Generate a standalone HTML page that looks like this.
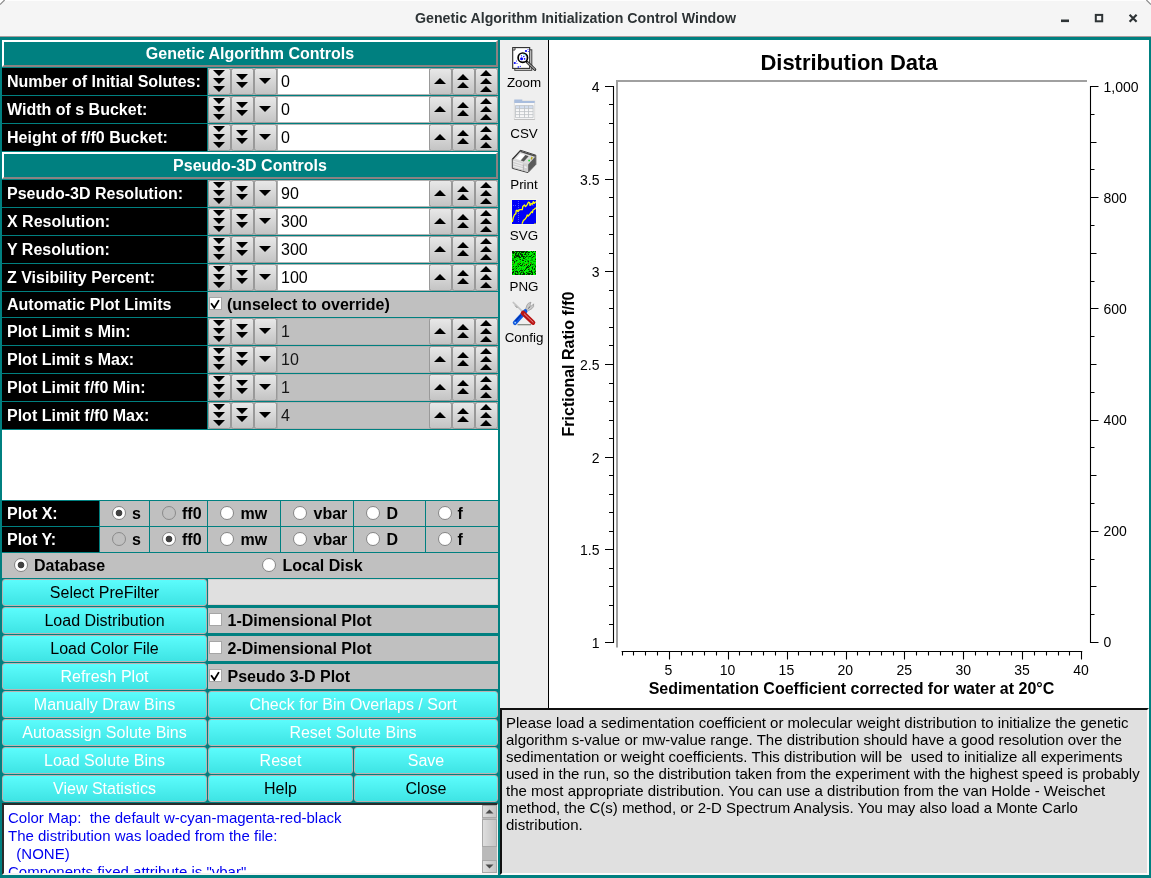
<!DOCTYPE html><html><head><meta charset='utf-8'><title>Genetic Algorithm Initialization Control Window</title><style>
*{box-sizing:border-box;margin:0;padding:0}
html,body{width:1151px;height:878px;overflow:hidden;background:#008080;font-family:"Liberation Sans",sans-serif;font-size:16px;color:#000}
div,span,svg{position:absolute}
.tb{left:0;top:0;width:1151px;height:37px;background:#f5f5f5;border-bottom:1px solid #a89c9c}
.tt{left:0;top:0;width:1151px;height:36px;line-height:36px;text-align:center;font-weight:bold;font-size:14.2px;color:#2e3436;position:absolute}
.hd{left:2px;width:496px;height:27px;border:2px solid #fff;border-right-color:#8b8282;border-bottom-color:#8b8282;color:#fff;font-weight:bold;text-align:center;line-height:24px;background:#008080}
.lb{left:2px;width:205px;height:27px;background:#000;color:#fff;font-weight:bold;line-height:28px;padding-left:5px;white-space:nowrap}
.cb{width:23px;height:27px;border:1px solid #999;border-radius:2.5px;background:linear-gradient(#e8e8e8,#c4c4c4)}
.cbg{width:70px;height:27px;background:#aeaeae}
.cb svg{left:0;top:0}
.in{left:278px;width:151px;height:27px;background:#fff;border-top:1px solid #b4b4b4;border-bottom:1px solid #b4b4b4;line-height:25px;padding-left:3px}
.in.d{background:#c0c0c0;color:#151515}
.g{background:#c0c0c0}
.b{font-weight:bold;white-space:nowrap}
.rd{width:14px;height:14px;border-radius:50%;border:1px solid #858585;background:#fff}
.rd.dis{background:#c0c0c0;border-color:#8a8a8a}
.rd.on{background:radial-gradient(circle at 50% 50%,#424242 0,#424242 2.9px,#fff 3.7px)}
.ck{width:13px;height:13px;background:#fff;border:1px solid #a6a6a6}
.pb{height:27px;border:1px solid #bcb0b0;border-radius:3px;background:linear-gradient(#5cfcfc,#3ee4e4);text-align:center;line-height:25px;white-space:nowrap}
.pb.w{color:#fff}
.tl{font-size:13.4px;text-align:center;width:48px;left:500px;line-height:15px}
</style></head><body><div id='w' style='left:0;top:0;width:1151px;height:878px;will-change:transform'>
<div class='tb'><div class='tt'>Genetic Algorithm Initialization Control Window</div>
<svg width='100' height='37' style='left:1051px;top:0' viewBox='1051 0 100 37'><rect x='1061' y='19.5' width='8' height='2.6' fill='#2e3436'/><rect x='1095.8' y='14.9' width='6.4' height='6.4' fill='none' stroke='#2e3436' stroke-width='2'/><path d='M1129.6 14.7 L1136.6 21.7 M1136.6 14.7 L1129.6 21.7' stroke='#2e3436' stroke-width='2.2' fill='none'/></svg><svg width='1151' height='8' style='left:0;top:0' viewBox='0 0 1151 8'><rect x='0' y='0' width='1151' height='1' fill='#fdfdfd'/><path d='M0 0 L5 0 L0 5Z M1151 0 L1146 0 L1151 5Z' fill='#fff'/><path d='M0 4.6 L4.6 0 M1151 4.6 L1146.4 0' stroke='#8c8c8c' stroke-width='1.2' fill='none'/></svg></div>
<div class='hd' style='top:40px'>Genetic Algorithm Controls</div>
<div class='lb' style='top:68px'>Number of Initial Solutes:</div>
<div class='cbg' style='left:208px;top:68px'></div><div class='cbg' style='left:429px;width:69px;top:68px'></div>
<div class='cb' style='left:208px;top:68px'><svg width='21' height='25' viewBox='0 0 21 25'><path d='M4.0 1.0 L16.0 1.0 L10 7.0Z M4.0 9.0 L16.0 9.0 L10 15.0Z M4.0 17.0 L16.0 17.0 L10 23.0Z' fill='#000'/></svg></div>
<div class='cb' style='left:231px;top:68px'><svg width='21' height='25' viewBox='0 0 21 25'><path d='M4.0 5.0 L16.0 5.0 L10 11.0Z M4.0 13.0 L16.0 13.0 L10 19.0Z' fill='#000'/></svg></div>
<div class='cb' style='left:254px;top:68px'><svg width='21' height='25' viewBox='0 0 21 25'><path d='M4.0 9.0 L16.0 9.0 L10 15.0Z' fill='#000'/></svg></div>
<div class='in' style='top:68px'>0</div>
<div class='cb' style='left:429px;top:68px'><svg width='21' height='25' viewBox='0 0 21 25'><path d='M4.0 15.0 L16.0 15.0 L10 9.0Z' fill='#000'/></svg></div>
<div class='cb' style='left:452px;top:68px'><svg width='21' height='25' viewBox='0 0 21 25'><path d='M4.0 11.0 L16.0 11.0 L10 5.0Z M4.0 19.0 L16.0 19.0 L10 13.0Z' fill='#000'/></svg></div>
<div class='cb' style='left:475px;top:68px'><svg width='21' height='25' viewBox='0 0 21 25'><path d='M4.0 7.0 L16.0 7.0 L10 1.0Z M4.0 15.0 L16.0 15.0 L10 9.0Z M4.0 23.0 L16.0 23.0 L10 17.0Z' fill='#000'/></svg></div>
<div class='lb' style='top:96px'>Width of s Bucket:</div>
<div class='cbg' style='left:208px;top:96px'></div><div class='cbg' style='left:429px;width:69px;top:96px'></div>
<div class='cb' style='left:208px;top:96px'><svg width='21' height='25' viewBox='0 0 21 25'><path d='M4.0 1.0 L16.0 1.0 L10 7.0Z M4.0 9.0 L16.0 9.0 L10 15.0Z M4.0 17.0 L16.0 17.0 L10 23.0Z' fill='#000'/></svg></div>
<div class='cb' style='left:231px;top:96px'><svg width='21' height='25' viewBox='0 0 21 25'><path d='M4.0 5.0 L16.0 5.0 L10 11.0Z M4.0 13.0 L16.0 13.0 L10 19.0Z' fill='#000'/></svg></div>
<div class='cb' style='left:254px;top:96px'><svg width='21' height='25' viewBox='0 0 21 25'><path d='M4.0 9.0 L16.0 9.0 L10 15.0Z' fill='#000'/></svg></div>
<div class='in' style='top:96px'>0</div>
<div class='cb' style='left:429px;top:96px'><svg width='21' height='25' viewBox='0 0 21 25'><path d='M4.0 15.0 L16.0 15.0 L10 9.0Z' fill='#000'/></svg></div>
<div class='cb' style='left:452px;top:96px'><svg width='21' height='25' viewBox='0 0 21 25'><path d='M4.0 11.0 L16.0 11.0 L10 5.0Z M4.0 19.0 L16.0 19.0 L10 13.0Z' fill='#000'/></svg></div>
<div class='cb' style='left:475px;top:96px'><svg width='21' height='25' viewBox='0 0 21 25'><path d='M4.0 7.0 L16.0 7.0 L10 1.0Z M4.0 15.0 L16.0 15.0 L10 9.0Z M4.0 23.0 L16.0 23.0 L10 17.0Z' fill='#000'/></svg></div>
<div class='lb' style='top:124px'>Height of f/f0 Bucket:</div>
<div class='cbg' style='left:208px;top:124px'></div><div class='cbg' style='left:429px;width:69px;top:124px'></div>
<div class='cb' style='left:208px;top:124px'><svg width='21' height='25' viewBox='0 0 21 25'><path d='M4.0 1.0 L16.0 1.0 L10 7.0Z M4.0 9.0 L16.0 9.0 L10 15.0Z M4.0 17.0 L16.0 17.0 L10 23.0Z' fill='#000'/></svg></div>
<div class='cb' style='left:231px;top:124px'><svg width='21' height='25' viewBox='0 0 21 25'><path d='M4.0 5.0 L16.0 5.0 L10 11.0Z M4.0 13.0 L16.0 13.0 L10 19.0Z' fill='#000'/></svg></div>
<div class='cb' style='left:254px;top:124px'><svg width='21' height='25' viewBox='0 0 21 25'><path d='M4.0 9.0 L16.0 9.0 L10 15.0Z' fill='#000'/></svg></div>
<div class='in' style='top:124px'>0</div>
<div class='cb' style='left:429px;top:124px'><svg width='21' height='25' viewBox='0 0 21 25'><path d='M4.0 15.0 L16.0 15.0 L10 9.0Z' fill='#000'/></svg></div>
<div class='cb' style='left:452px;top:124px'><svg width='21' height='25' viewBox='0 0 21 25'><path d='M4.0 11.0 L16.0 11.0 L10 5.0Z M4.0 19.0 L16.0 19.0 L10 13.0Z' fill='#000'/></svg></div>
<div class='cb' style='left:475px;top:124px'><svg width='21' height='25' viewBox='0 0 21 25'><path d='M4.0 7.0 L16.0 7.0 L10 1.0Z M4.0 15.0 L16.0 15.0 L10 9.0Z M4.0 23.0 L16.0 23.0 L10 17.0Z' fill='#000'/></svg></div>
<div class='hd' style='top:152px'>Pseudo-3D Controls</div>
<div class='lb' style='top:180px'>Pseudo-3D Resolution:</div>
<div class='cbg' style='left:208px;top:180px'></div><div class='cbg' style='left:429px;width:69px;top:180px'></div>
<div class='cb' style='left:208px;top:180px'><svg width='21' height='25' viewBox='0 0 21 25'><path d='M4.0 1.0 L16.0 1.0 L10 7.0Z M4.0 9.0 L16.0 9.0 L10 15.0Z M4.0 17.0 L16.0 17.0 L10 23.0Z' fill='#000'/></svg></div>
<div class='cb' style='left:231px;top:180px'><svg width='21' height='25' viewBox='0 0 21 25'><path d='M4.0 5.0 L16.0 5.0 L10 11.0Z M4.0 13.0 L16.0 13.0 L10 19.0Z' fill='#000'/></svg></div>
<div class='cb' style='left:254px;top:180px'><svg width='21' height='25' viewBox='0 0 21 25'><path d='M4.0 9.0 L16.0 9.0 L10 15.0Z' fill='#000'/></svg></div>
<div class='in' style='top:180px'>90</div>
<div class='cb' style='left:429px;top:180px'><svg width='21' height='25' viewBox='0 0 21 25'><path d='M4.0 15.0 L16.0 15.0 L10 9.0Z' fill='#000'/></svg></div>
<div class='cb' style='left:452px;top:180px'><svg width='21' height='25' viewBox='0 0 21 25'><path d='M4.0 11.0 L16.0 11.0 L10 5.0Z M4.0 19.0 L16.0 19.0 L10 13.0Z' fill='#000'/></svg></div>
<div class='cb' style='left:475px;top:180px'><svg width='21' height='25' viewBox='0 0 21 25'><path d='M4.0 7.0 L16.0 7.0 L10 1.0Z M4.0 15.0 L16.0 15.0 L10 9.0Z M4.0 23.0 L16.0 23.0 L10 17.0Z' fill='#000'/></svg></div>
<div class='lb' style='top:208px'>X Resolution:</div>
<div class='cbg' style='left:208px;top:208px'></div><div class='cbg' style='left:429px;width:69px;top:208px'></div>
<div class='cb' style='left:208px;top:208px'><svg width='21' height='25' viewBox='0 0 21 25'><path d='M4.0 1.0 L16.0 1.0 L10 7.0Z M4.0 9.0 L16.0 9.0 L10 15.0Z M4.0 17.0 L16.0 17.0 L10 23.0Z' fill='#000'/></svg></div>
<div class='cb' style='left:231px;top:208px'><svg width='21' height='25' viewBox='0 0 21 25'><path d='M4.0 5.0 L16.0 5.0 L10 11.0Z M4.0 13.0 L16.0 13.0 L10 19.0Z' fill='#000'/></svg></div>
<div class='cb' style='left:254px;top:208px'><svg width='21' height='25' viewBox='0 0 21 25'><path d='M4.0 9.0 L16.0 9.0 L10 15.0Z' fill='#000'/></svg></div>
<div class='in' style='top:208px'>300</div>
<div class='cb' style='left:429px;top:208px'><svg width='21' height='25' viewBox='0 0 21 25'><path d='M4.0 15.0 L16.0 15.0 L10 9.0Z' fill='#000'/></svg></div>
<div class='cb' style='left:452px;top:208px'><svg width='21' height='25' viewBox='0 0 21 25'><path d='M4.0 11.0 L16.0 11.0 L10 5.0Z M4.0 19.0 L16.0 19.0 L10 13.0Z' fill='#000'/></svg></div>
<div class='cb' style='left:475px;top:208px'><svg width='21' height='25' viewBox='0 0 21 25'><path d='M4.0 7.0 L16.0 7.0 L10 1.0Z M4.0 15.0 L16.0 15.0 L10 9.0Z M4.0 23.0 L16.0 23.0 L10 17.0Z' fill='#000'/></svg></div>
<div class='lb' style='top:236px'>Y Resolution:</div>
<div class='cbg' style='left:208px;top:236px'></div><div class='cbg' style='left:429px;width:69px;top:236px'></div>
<div class='cb' style='left:208px;top:236px'><svg width='21' height='25' viewBox='0 0 21 25'><path d='M4.0 1.0 L16.0 1.0 L10 7.0Z M4.0 9.0 L16.0 9.0 L10 15.0Z M4.0 17.0 L16.0 17.0 L10 23.0Z' fill='#000'/></svg></div>
<div class='cb' style='left:231px;top:236px'><svg width='21' height='25' viewBox='0 0 21 25'><path d='M4.0 5.0 L16.0 5.0 L10 11.0Z M4.0 13.0 L16.0 13.0 L10 19.0Z' fill='#000'/></svg></div>
<div class='cb' style='left:254px;top:236px'><svg width='21' height='25' viewBox='0 0 21 25'><path d='M4.0 9.0 L16.0 9.0 L10 15.0Z' fill='#000'/></svg></div>
<div class='in' style='top:236px'>300</div>
<div class='cb' style='left:429px;top:236px'><svg width='21' height='25' viewBox='0 0 21 25'><path d='M4.0 15.0 L16.0 15.0 L10 9.0Z' fill='#000'/></svg></div>
<div class='cb' style='left:452px;top:236px'><svg width='21' height='25' viewBox='0 0 21 25'><path d='M4.0 11.0 L16.0 11.0 L10 5.0Z M4.0 19.0 L16.0 19.0 L10 13.0Z' fill='#000'/></svg></div>
<div class='cb' style='left:475px;top:236px'><svg width='21' height='25' viewBox='0 0 21 25'><path d='M4.0 7.0 L16.0 7.0 L10 1.0Z M4.0 15.0 L16.0 15.0 L10 9.0Z M4.0 23.0 L16.0 23.0 L10 17.0Z' fill='#000'/></svg></div>
<div class='lb' style='top:264px'>Z Visibility Percent:</div>
<div class='cbg' style='left:208px;top:264px'></div><div class='cbg' style='left:429px;width:69px;top:264px'></div>
<div class='cb' style='left:208px;top:264px'><svg width='21' height='25' viewBox='0 0 21 25'><path d='M4.0 1.0 L16.0 1.0 L10 7.0Z M4.0 9.0 L16.0 9.0 L10 15.0Z M4.0 17.0 L16.0 17.0 L10 23.0Z' fill='#000'/></svg></div>
<div class='cb' style='left:231px;top:264px'><svg width='21' height='25' viewBox='0 0 21 25'><path d='M4.0 5.0 L16.0 5.0 L10 11.0Z M4.0 13.0 L16.0 13.0 L10 19.0Z' fill='#000'/></svg></div>
<div class='cb' style='left:254px;top:264px'><svg width='21' height='25' viewBox='0 0 21 25'><path d='M4.0 9.0 L16.0 9.0 L10 15.0Z' fill='#000'/></svg></div>
<div class='in' style='top:264px'>100</div>
<div class='cb' style='left:429px;top:264px'><svg width='21' height='25' viewBox='0 0 21 25'><path d='M4.0 15.0 L16.0 15.0 L10 9.0Z' fill='#000'/></svg></div>
<div class='cb' style='left:452px;top:264px'><svg width='21' height='25' viewBox='0 0 21 25'><path d='M4.0 11.0 L16.0 11.0 L10 5.0Z M4.0 19.0 L16.0 19.0 L10 13.0Z' fill='#000'/></svg></div>
<div class='cb' style='left:475px;top:264px'><svg width='21' height='25' viewBox='0 0 21 25'><path d='M4.0 7.0 L16.0 7.0 L10 1.0Z M4.0 15.0 L16.0 15.0 L10 9.0Z M4.0 23.0 L16.0 23.0 L10 17.0Z' fill='#000'/></svg></div>
<div class='lb' style='top:292px;height:25px;line-height:26px'>Automatic Plot Limits</div>
<div class='g' style='left:208px;top:292px;width:290px;height:25px'></div>
<div class='ck' style='left:209px;top:297px'><svg width='11' height='11' viewBox='0 0 11 11' style='left:0;top:0'><path d='M1.1 5.2 L4.3 9.8 L8.9 2.1' fill='none' stroke='#000' stroke-width='1.8'/></svg></div>
<div class='b' style='left:227px;top:292px;line-height:26px'>(unselect to override)</div>
<div class='lb' style='top:318px'>Plot Limit s Min:</div>
<div class='cbg' style='left:208px;top:318px'></div><div class='cbg' style='left:429px;width:69px;top:318px'></div>
<div class='cb' style='left:208px;top:318px'><svg width='21' height='25' viewBox='0 0 21 25'><path d='M4.0 1.0 L16.0 1.0 L10 7.0Z M4.0 9.0 L16.0 9.0 L10 15.0Z M4.0 17.0 L16.0 17.0 L10 23.0Z' fill='#000'/></svg></div>
<div class='cb' style='left:231px;top:318px'><svg width='21' height='25' viewBox='0 0 21 25'><path d='M4.0 5.0 L16.0 5.0 L10 11.0Z M4.0 13.0 L16.0 13.0 L10 19.0Z' fill='#000'/></svg></div>
<div class='cb' style='left:254px;top:318px'><svg width='21' height='25' viewBox='0 0 21 25'><path d='M4.0 9.0 L16.0 9.0 L10 15.0Z' fill='#000'/></svg></div>
<div class='in d' style='top:318px'>1</div>
<div class='cb' style='left:429px;top:318px'><svg width='21' height='25' viewBox='0 0 21 25'><path d='M4.0 15.0 L16.0 15.0 L10 9.0Z' fill='#000'/></svg></div>
<div class='cb' style='left:452px;top:318px'><svg width='21' height='25' viewBox='0 0 21 25'><path d='M4.0 11.0 L16.0 11.0 L10 5.0Z M4.0 19.0 L16.0 19.0 L10 13.0Z' fill='#000'/></svg></div>
<div class='cb' style='left:475px;top:318px'><svg width='21' height='25' viewBox='0 0 21 25'><path d='M4.0 7.0 L16.0 7.0 L10 1.0Z M4.0 15.0 L16.0 15.0 L10 9.0Z M4.0 23.0 L16.0 23.0 L10 17.0Z' fill='#000'/></svg></div>
<div class='lb' style='top:346px'>Plot Limit s Max:</div>
<div class='cbg' style='left:208px;top:346px'></div><div class='cbg' style='left:429px;width:69px;top:346px'></div>
<div class='cb' style='left:208px;top:346px'><svg width='21' height='25' viewBox='0 0 21 25'><path d='M4.0 1.0 L16.0 1.0 L10 7.0Z M4.0 9.0 L16.0 9.0 L10 15.0Z M4.0 17.0 L16.0 17.0 L10 23.0Z' fill='#000'/></svg></div>
<div class='cb' style='left:231px;top:346px'><svg width='21' height='25' viewBox='0 0 21 25'><path d='M4.0 5.0 L16.0 5.0 L10 11.0Z M4.0 13.0 L16.0 13.0 L10 19.0Z' fill='#000'/></svg></div>
<div class='cb' style='left:254px;top:346px'><svg width='21' height='25' viewBox='0 0 21 25'><path d='M4.0 9.0 L16.0 9.0 L10 15.0Z' fill='#000'/></svg></div>
<div class='in d' style='top:346px'>10</div>
<div class='cb' style='left:429px;top:346px'><svg width='21' height='25' viewBox='0 0 21 25'><path d='M4.0 15.0 L16.0 15.0 L10 9.0Z' fill='#000'/></svg></div>
<div class='cb' style='left:452px;top:346px'><svg width='21' height='25' viewBox='0 0 21 25'><path d='M4.0 11.0 L16.0 11.0 L10 5.0Z M4.0 19.0 L16.0 19.0 L10 13.0Z' fill='#000'/></svg></div>
<div class='cb' style='left:475px;top:346px'><svg width='21' height='25' viewBox='0 0 21 25'><path d='M4.0 7.0 L16.0 7.0 L10 1.0Z M4.0 15.0 L16.0 15.0 L10 9.0Z M4.0 23.0 L16.0 23.0 L10 17.0Z' fill='#000'/></svg></div>
<div class='lb' style='top:374px'>Plot Limit f/f0 Min:</div>
<div class='cbg' style='left:208px;top:374px'></div><div class='cbg' style='left:429px;width:69px;top:374px'></div>
<div class='cb' style='left:208px;top:374px'><svg width='21' height='25' viewBox='0 0 21 25'><path d='M4.0 1.0 L16.0 1.0 L10 7.0Z M4.0 9.0 L16.0 9.0 L10 15.0Z M4.0 17.0 L16.0 17.0 L10 23.0Z' fill='#000'/></svg></div>
<div class='cb' style='left:231px;top:374px'><svg width='21' height='25' viewBox='0 0 21 25'><path d='M4.0 5.0 L16.0 5.0 L10 11.0Z M4.0 13.0 L16.0 13.0 L10 19.0Z' fill='#000'/></svg></div>
<div class='cb' style='left:254px;top:374px'><svg width='21' height='25' viewBox='0 0 21 25'><path d='M4.0 9.0 L16.0 9.0 L10 15.0Z' fill='#000'/></svg></div>
<div class='in d' style='top:374px'>1</div>
<div class='cb' style='left:429px;top:374px'><svg width='21' height='25' viewBox='0 0 21 25'><path d='M4.0 15.0 L16.0 15.0 L10 9.0Z' fill='#000'/></svg></div>
<div class='cb' style='left:452px;top:374px'><svg width='21' height='25' viewBox='0 0 21 25'><path d='M4.0 11.0 L16.0 11.0 L10 5.0Z M4.0 19.0 L16.0 19.0 L10 13.0Z' fill='#000'/></svg></div>
<div class='cb' style='left:475px;top:374px'><svg width='21' height='25' viewBox='0 0 21 25'><path d='M4.0 7.0 L16.0 7.0 L10 1.0Z M4.0 15.0 L16.0 15.0 L10 9.0Z M4.0 23.0 L16.0 23.0 L10 17.0Z' fill='#000'/></svg></div>
<div class='lb' style='top:402px'>Plot Limit f/f0 Max:</div>
<div class='cbg' style='left:208px;top:402px'></div><div class='cbg' style='left:429px;width:69px;top:402px'></div>
<div class='cb' style='left:208px;top:402px'><svg width='21' height='25' viewBox='0 0 21 25'><path d='M4.0 1.0 L16.0 1.0 L10 7.0Z M4.0 9.0 L16.0 9.0 L10 15.0Z M4.0 17.0 L16.0 17.0 L10 23.0Z' fill='#000'/></svg></div>
<div class='cb' style='left:231px;top:402px'><svg width='21' height='25' viewBox='0 0 21 25'><path d='M4.0 5.0 L16.0 5.0 L10 11.0Z M4.0 13.0 L16.0 13.0 L10 19.0Z' fill='#000'/></svg></div>
<div class='cb' style='left:254px;top:402px'><svg width='21' height='25' viewBox='0 0 21 25'><path d='M4.0 9.0 L16.0 9.0 L10 15.0Z' fill='#000'/></svg></div>
<div class='in d' style='top:402px'>4</div>
<div class='cb' style='left:429px;top:402px'><svg width='21' height='25' viewBox='0 0 21 25'><path d='M4.0 15.0 L16.0 15.0 L10 9.0Z' fill='#000'/></svg></div>
<div class='cb' style='left:452px;top:402px'><svg width='21' height='25' viewBox='0 0 21 25'><path d='M4.0 11.0 L16.0 11.0 L10 5.0Z M4.0 19.0 L16.0 19.0 L10 13.0Z' fill='#000'/></svg></div>
<div class='cb' style='left:475px;top:402px'><svg width='21' height='25' viewBox='0 0 21 25'><path d='M4.0 7.0 L16.0 7.0 L10 1.0Z M4.0 15.0 L16.0 15.0 L10 9.0Z M4.0 23.0 L16.0 23.0 L10 17.0Z' fill='#000'/></svg></div>
<div style='left:2px;top:430px;width:496px;height:70px;background:#fff'></div>
<div class='lb' style='top:501px;width:97px;height:25px;line-height:26px'>Plot X:</div>
<div class='g' style='left:100px;top:501px;width:49px;height:25px'></div>
<div class='rd on' style='left:112px;top:506px'></div>
<div class='b' style='left:132px;top:501px;line-height:26px'>s</div>
<div class='g' style='left:150px;top:501px;width:57px;height:25px'></div>
<div class='rd dis' style='left:162px;top:506px'></div>
<div class='b' style='left:182px;top:501px;line-height:26px'>ff0</div>
<div class='g' style='left:208px;top:501px;width:72px;height:25px'></div>
<div class='rd' style='left:220px;top:506px'></div>
<div class='b' style='left:240.5px;top:501px;line-height:26px'>mw</div>
<div class='g' style='left:281px;top:501px;width:72px;height:25px'></div>
<div class='rd' style='left:293px;top:506px'></div>
<div class='b' style='left:313.5px;top:501px;line-height:26px'>vbar</div>
<div class='g' style='left:354px;top:501px;width:71px;height:25px'></div>
<div class='rd' style='left:366px;top:506px'></div>
<div class='b' style='left:386.5px;top:501px;line-height:26px'>D</div>
<div class='g' style='left:426px;top:501px;width:72px;height:25px'></div>
<div class='rd' style='left:437.5px;top:506px'></div>
<div class='b' style='left:457.5px;top:501px;line-height:26px'>f</div>
<div class='lb' style='top:527px;width:97px;height:25px;line-height:26px'>Plot Y:</div>
<div class='g' style='left:100px;top:527px;width:49px;height:25px'></div>
<div class='rd dis' style='left:112px;top:532px'></div>
<div class='b' style='left:132px;top:527px;line-height:26px'>s</div>
<div class='g' style='left:150px;top:527px;width:57px;height:25px'></div>
<div class='rd on' style='left:162px;top:532px'></div>
<div class='b' style='left:182px;top:527px;line-height:26px'>ff0</div>
<div class='g' style='left:208px;top:527px;width:72px;height:25px'></div>
<div class='rd' style='left:220px;top:532px'></div>
<div class='b' style='left:240.5px;top:527px;line-height:26px'>mw</div>
<div class='g' style='left:281px;top:527px;width:72px;height:25px'></div>
<div class='rd' style='left:293px;top:532px'></div>
<div class='b' style='left:313.5px;top:527px;line-height:26px'>vbar</div>
<div class='g' style='left:354px;top:527px;width:71px;height:25px'></div>
<div class='rd' style='left:366px;top:532px'></div>
<div class='b' style='left:386.5px;top:527px;line-height:26px'>D</div>
<div class='g' style='left:426px;top:527px;width:72px;height:25px'></div>
<div class='rd' style='left:437.5px;top:532px'></div>
<div class='b' style='left:457.5px;top:527px;line-height:26px'>f</div>
<div class='g' style='left:2px;top:553px;width:496px;height:25px'></div>
<div class='rd on' style='left:14px;top:558px'></div><div class='b' style='left:34px;top:553px;line-height:26px'>Database</div>
<div class='rd' style='left:262px;top:558px'></div><div class='b' style='left:282.5px;top:553px;line-height:26px'>Local Disk</div>
<div class='pb' style='left:2px;top:579px;width:205px'>Select PreFilter</div>
<div style='left:208px;top:579px;width:290px;height:26px;background:#e0e0e0;border:1px solid #d6cfcf'></div>
<div class='pb' style='left:2px;top:607px;width:205px'>Load Distribution</div>
<div class='pb' style='left:2px;top:635px;width:205px'>Load Color File</div>
<div class='pb w' style='left:2px;top:663px;width:205px'>Refresh Plot</div>
<div class='g' style='left:208px;top:608px;width:290px;height:25px'></div>
<div class='ck' style='left:209px;top:613px'></div>
<div class='b' style='left:227.5px;top:608px;line-height:25px'>1-Dimensional Plot</div>
<div class='g' style='left:208px;top:636px;width:290px;height:25px'></div>
<div class='ck' style='left:209px;top:641px'></div>
<div class='b' style='left:227.5px;top:636px;line-height:25px'>2-Dimensional Plot</div>
<div class='g' style='left:208px;top:664px;width:290px;height:25px'></div>
<div class='ck' style='left:209px;top:669px'><svg width='11' height='11' viewBox='0 0 11 11' style='left:0;top:0'><path d='M1.1 5.2 L4.3 9.8 L8.9 2.1' fill='none' stroke='#000' stroke-width='1.8'/></svg></div>
<div class='b' style='left:227.5px;top:664px;line-height:25px'>Pseudo 3-D Plot</div>
<div class='pb w' style='left:2px;top:691px;width:205px'>Manually Draw Bins</div>
<div class='pb w' style='left:208px;top:691px;width:290px'>Check for Bin Overlaps / Sort</div>
<div class='pb w' style='left:2px;top:719px;width:205px'>Autoassign Solute Bins</div>
<div class='pb w' style='left:208px;top:719px;width:290px'>Reset Solute Bins</div>
<div class='pb w' style='left:2px;top:747px;width:205px'>Load Solute Bins</div>
<div class='pb w' style='left:208px;top:747px;width:145px'>Reset</div>
<div class='pb w' style='left:354px;top:747px;width:144px'>Save</div>
<div class='pb w' style='left:2px;top:775px;width:205px'>View Statistics</div>
<div class='pb' style='left:208px;top:775px;width:145px'>Help</div>
<div class='pb' style='left:354px;top:775px;width:144px'>Close</div>
<div style='left:2px;top:803px;width:496px;height:72px;background:#fff;border-top:2px solid #2a2a2a;border-left:2px solid #2a2a2a;border-right:1px solid #f0f0f0;border-bottom:2px solid #f4f4f4;overflow:hidden'><div style='left:4px;top:4px;font-size:15px;line-height:18px;color:#0000f0;white-space:pre'>Color Map:  the default w-cyan-magenta-red-black
The distribution was loaded from the file:
  (NONE)
Components fixed attribute is "vbar"</div><div style='left:478px;top:0;width:15px;height:68px;background:#bababa'></div><div style='left:478px;top:0;width:15px;height:13px;background:linear-gradient(90deg,#dedede,#c4c4c4);border:1px solid #a8a8a8'></div><div style='left:478px;top:14px;width:15px;height:28px;background:linear-gradient(90deg,#dedede,#c4c4c4);border:1px solid #a8a8a8'></div><div style='left:478px;top:55px;width:15px;height:13px;background:linear-gradient(90deg,#dedede,#c4c4c4);border:1px solid #a8a8a8'></div><svg width='15' height='69' style='left:478px;top:0' viewBox='0 0 15 69'><path d='M3.5 8.5 L11.5 8.5 L7.5 4.5Z M3.5 59.5 L11.5 59.5 L7.5 63.5Z' fill='#4a4a4a'/></svg></div>
<div style='left:500px;top:40px;width:48px;height:668px;background:#efefef'></div>
<div style='left:548px;top:40px;width:1px;height:668px;background:#000'></div>
<div style='left:549px;top:40px;width:600px;height:668px;background:#fff'></div>
<div style='left:500px;top:708px;width:649px;height:167px;background:#e0e0e0;border-top:2px solid #101010;border-left:2px solid #101010;border-right:2px solid #fafafa;border-bottom:2px solid #fafafa'><div style='left:4px;top:4px;width:640px;font-size:15px;line-height:17px;color:#000;white-space:pre'>Please load a sedimentation coefficient or molecular weight distribution to initialize the genetic
algorithm s-value or mw-value range. The distribution should have a good resolution over the
sedimentation or weight coefficients. This distribution will be  used to initialize all experiments
used in the run, so the distribution taken from the experiment with the highest speed is probably
the most appropriate distribution. You can use a distribution from the van Holde - Weischet
method, the C(s) method, or 2-D Spectrum Analysis. You may also load a Monte Carlo
distribution.</div></div>
<div class='tl' style='top:75px'>Zoom</div>
<div class='tl' style='top:126px'>CSV</div>
<div class='tl' style='top:177px'>Print</div>
<div class='tl' style='top:228px'>SVG</div>
<div class='tl' style='top:279px'>PNG</div>
<div class='tl' style='top:330px'>Config</div>
<svg width='48' height='300' viewBox='500 40 48 300' style='left:500px;top:40px'><rect x='514.8' y='49.8' width='17' height='20.5' fill='#e8e8e8' stroke='#3a3a3a' stroke-width='1'/><rect x='512.7' y='47.6' width='17' height='20.8' fill='#fff' stroke='#2a2a2a' stroke-width='1.1'/><path d='M512.7 50 L515 50 L515 47.6' fill='none' stroke='#2a2a2a' stroke-width='0.9'/><circle cx='526' cy='51' r='1.1' fill='#0000ff'/><circle cx='528' cy='49.5' r='0.5' fill='#0000ff'/><circle cx='528.3' cy='51.6' r='0.5' fill='#0000ff'/><circle cx='514.8' cy='63' r='1.1' fill='#0000ff'/><circle cx='516.5' cy='61' r='0.5' fill='#0000ff'/><circle cx='517' cy='63.6' r='0.5' fill='#0000ff'/><circle cx='518.3' cy='67' r='0.8' fill='#0000ff'/><circle cx='520.3' cy='66.3' r='0.6' fill='#0000ff'/><path d='M527 62 L534.9 69.5' stroke='#222' stroke-width='2.7' stroke-linecap='round'/><path d='M527.6 62.6 L534.7 69.3' stroke='#9a9a9a' stroke-width='1.2' stroke-linecap='round'/><circle cx='522.8' cy='57.7' r='4.7' fill='#fdfdfd' stroke='#000' stroke-width='1.7'/><path d='M523.3 54.3 Q525 54.6 525.8 55.8' stroke='#60e0e0' stroke-width='1' fill='none'/><circle cx='521.6' cy='58.8' r='1.5' fill='#0000ff'/><circle cx='524.6' cy='58.9' r='0.8' fill='#0000ff'/><circle cx='523.8' cy='56.5' r='0.7' fill='#0000ff'/><circle cx='521.5' cy='55.8' r='0.6' fill='#0000ff'/><rect x='514.3' y='101' width='20.4' height='18.4' fill='#f8f8f8' stroke='#d8d8d8' stroke-width='0.8'/><path d='M514.3 99.4 h8 v1.6 h12.4 v2 h-20.4z' fill='#a9bddd'/><rect x='515.5' y='105.6' width='17.6' height='3' fill='#d3deef'/><path d='M515.4 105.6 h17.8 M515.4 108.6 h17.8 M515.4 111.6 h17.8 M515.4 114.6 h17.8 M515.4 117.6 h17.8 M515.5 105.6 v12 M519.5 105.6 v12 M524.5 105.6 v12 M528.5 105.6 v12 M533.1 105.6 v12' stroke='#bcc0c4' stroke-width='0.8' fill='none'/><rect x='514.2' y='119' width='20.6' height='0.9' fill='#bdbdbd'/><path d='M520.6 150.3 L535.8 155.2 L535.8 164.4 L527.9 172.6 L512.3 168.3 L512.3 159.4Z' fill='#d4d4d4' stroke='#2c2c2c' stroke-width='0.9' stroke-linejoin='round'/><path d='M520.8 151 L535 155.5 L527.8 163.8 L513.4 159.4Z' fill='#dcdcdc'/><path d='M512.9 160 L527.5 164.4 L527.5 171.9 L512.9 167.8Z' fill='#cfcfcf'/><path d='M513.2 161.3 L522.8 164.1 M513.2 163.7 L522.8 166.5 M513.2 166.1 L522.8 168.9' stroke='#ececec' stroke-width='1.1' fill='none'/><path d='M523.4 164.6 L523.4 170.8' stroke='#a8a8a8' stroke-width='0.7'/><path d='M524.4 166 L526.6 166.7 L526.6 168.2 L524.4 167.5Z' fill='#f4f4f4'/><path d='M528.2 164.6 L535.4 156.4 L535.4 164.2 L528.2 172Z' fill='#5a5a5a'/><path d='M520.6 150.4 L512.5 159.3' stroke='#3a3a3a' stroke-width='1.3'/><path d='M520.4 151.3 L535 156' stroke='#4a4a4a' stroke-width='1.4'/><path d='M520.5 153.5 L525 155 L520.3 160.3 L515.8 158.8Z' fill='#fff'/><path d='M525.4 155.1 L528.6 156.2 L523.8 161.5 L520.8 160.5Z' fill='#555'/><circle cx='529.1' cy='160.5' r='0.9' fill='#20e030'/><path d='M530.6 159.2 L531.4 156.6 L532.9 157.6 L531.6 159.8Z' fill='#b0a818'/><rect x='511.3' y='199.3' width='25.4' height='25.4' fill='#fbfbe6'/><rect x='512' y='200' width='24' height='24' fill='#0000f8'/><path d='M518.5 201 v22 M513 205.5 h4 M530.5 205.5 h4' stroke='#7070ff' stroke-width='0.8' stroke-dasharray='1 1' fill='none'/><path d='M512.3 222 L513.3 217.5 L514.6 214.6 L515.8 213.8 L516.2 210.6 L517.2 210.2 L518 211.6 L519.6 209.6 L522.3 209.6 L522.8 206.4 L524.4 205 L525.6 206.6 L527.2 204.6 L528.4 202.2 L529.6 202.6 L530 205.4 L531.2 203.6 L532.4 204.2 L533.4 201.6 L534.2 203.4 L535.8 201.6' stroke='#ffff00' stroke-width='1.3' fill='none' stroke-linejoin='round'/><path d='M522 223.8 L523.4 220.6 L525 219.2 L526.4 217.4 L527.2 215 L528.2 216 L530 214 L531.4 211.8 L532.4 212.6 L533 210 L534.4 209.2 L535.8 207.8' stroke='#ffff00' stroke-width='1.3' fill='none' stroke-linejoin='round'/><path d='M534.4 223.4 L535.8 223.8' stroke='#e0e000' stroke-width='1'/><rect x='511.3' y='250.3' width='25.4' height='25.4' fill='#fdf0fd'/><rect x='512' y='251' width='24' height='24' fill='#00f000'/><path d='M517 251h1v1h-1zM523 251h1v1h-1zM525 251h1v1h-1zM531 251h1v1h-1zM512 252h1v1h-1zM513 252h1v1h-1zM514 252h1v1h-1zM517 252h1v1h-1zM521 252h1v1h-1zM522 252h1v1h-1zM523 252h1v1h-1zM525 252h1v1h-1zM526 252h1v1h-1zM527 252h1v1h-1zM512 253h1v1h-1zM513 253h1v1h-1zM515 253h1v1h-1zM519 253h1v1h-1zM520 253h1v1h-1zM521 253h1v1h-1zM527 253h1v1h-1zM528 253h1v1h-1zM533 253h1v1h-1zM515 254h1v1h-1zM516 254h1v1h-1zM517 254h1v1h-1zM526 254h1v1h-1zM528 254h1v1h-1zM532 254h1v1h-1zM533 254h1v1h-1zM512 255h1v1h-1zM513 255h1v1h-1zM517 255h1v1h-1zM519 255h1v1h-1zM526 255h1v1h-1zM527 255h1v1h-1zM531 255h1v1h-1zM535 255h1v1h-1zM514 256h1v1h-1zM515 256h1v1h-1zM519 256h1v1h-1zM523 256h1v1h-1zM527 256h1v1h-1zM528 256h1v1h-1zM533 256h1v1h-1zM534 256h1v1h-1zM514 257h1v1h-1zM516 257h1v1h-1zM518 257h1v1h-1zM519 257h1v1h-1zM520 257h1v1h-1zM528 257h1v1h-1zM531 257h1v1h-1zM512 258h1v1h-1zM513 258h1v1h-1zM514 258h1v1h-1zM517 258h1v1h-1zM519 258h1v1h-1zM524 258h1v1h-1zM528 258h1v1h-1zM531 258h1v1h-1zM535 258h1v1h-1zM512 259h1v1h-1zM513 259h1v1h-1zM515 259h1v1h-1zM519 259h1v1h-1zM522 259h1v1h-1zM525 259h1v1h-1zM526 259h1v1h-1zM531 259h1v1h-1zM532 259h1v1h-1zM513 260h1v1h-1zM517 260h1v1h-1zM527 260h1v1h-1zM528 260h1v1h-1zM530 260h1v1h-1zM531 260h1v1h-1zM532 260h1v1h-1zM514 261h1v1h-1zM515 261h1v1h-1zM516 261h1v1h-1zM520 261h1v1h-1zM527 261h1v1h-1zM533 261h1v1h-1zM534 261h1v1h-1zM535 261h1v1h-1zM512 262h1v1h-1zM519 262h1v1h-1zM523 262h1v1h-1zM528 262h1v1h-1zM530 262h1v1h-1zM531 262h1v1h-1zM514 263h1v1h-1zM517 263h1v1h-1zM520 263h1v1h-1zM522 263h1v1h-1zM523 263h1v1h-1zM524 263h1v1h-1zM527 263h1v1h-1zM528 263h1v1h-1zM531 263h1v1h-1zM533 263h1v1h-1zM512 264h1v1h-1zM513 264h1v1h-1zM517 264h1v1h-1zM518 264h1v1h-1zM531 264h1v1h-1zM533 264h1v1h-1zM534 264h1v1h-1zM517 265h1v1h-1zM518 265h1v1h-1zM522 265h1v1h-1zM526 265h1v1h-1zM530 265h1v1h-1zM534 265h1v1h-1zM535 265h1v1h-1zM515 266h1v1h-1zM521 266h1v1h-1zM523 266h1v1h-1zM527 266h1v1h-1zM528 266h1v1h-1zM532 266h1v1h-1zM533 266h1v1h-1zM512 267h1v1h-1zM515 267h1v1h-1zM517 267h1v1h-1zM528 267h1v1h-1zM531 267h1v1h-1zM535 267h1v1h-1zM513 268h1v1h-1zM514 268h1v1h-1zM516 268h1v1h-1zM519 268h1v1h-1zM521 268h1v1h-1zM525 268h1v1h-1zM529 268h1v1h-1zM534 268h1v1h-1zM515 269h1v1h-1zM518 269h1v1h-1zM521 269h1v1h-1zM523 269h1v1h-1zM525 269h1v1h-1zM528 269h1v1h-1zM529 269h1v1h-1zM532 269h1v1h-1zM533 269h1v1h-1zM534 269h1v1h-1zM514 270h1v1h-1zM516 270h1v1h-1zM524 270h1v1h-1zM529 270h1v1h-1zM535 270h1v1h-1zM513 271h1v1h-1zM515 271h1v1h-1zM521 271h1v1h-1zM522 271h1v1h-1zM523 271h1v1h-1zM528 271h1v1h-1zM529 271h1v1h-1zM531 271h1v1h-1zM532 271h1v1h-1zM534 271h1v1h-1zM512 272h1v1h-1zM515 272h1v1h-1zM518 272h1v1h-1zM520 272h1v1h-1zM521 272h1v1h-1zM522 272h1v1h-1zM527 272h1v1h-1zM528 272h1v1h-1zM512 273h1v1h-1zM514 273h1v1h-1zM517 273h1v1h-1zM518 273h1v1h-1zM520 273h1v1h-1zM523 273h1v1h-1zM524 273h1v1h-1zM529 273h1v1h-1zM532 273h1v1h-1zM512 274h1v1h-1zM518 274h1v1h-1zM519 274h1v1h-1zM520 274h1v1h-1zM521 274h1v1h-1zM527 274h1v1h-1zM532 274h1v1h-1zM535 274h1v1h-1z' fill='#00a800'/><path d='M512 251h1v1h-1zM513 251h1v1h-1zM515 251h1v1h-1zM516 251h1v1h-1zM517 251h1v1h-1zM518 251h1v1h-1zM519 251h1v1h-1zM520 251h1v1h-1zM521 251h1v1h-1zM522 251h1v1h-1zM523 251h1v1h-1zM524 251h1v1h-1zM526 251h1v1h-1zM527 251h1v1h-1zM531 251h1v1h-1zM533 251h1v1h-1zM535 251h1v1h-1zM512 252h1v1h-1zM513 252h1v1h-1zM514 252h1v1h-1zM516 252h1v1h-1zM519 252h1v1h-1zM521 252h1v1h-1zM522 252h1v1h-1zM523 252h1v1h-1zM525 252h1v1h-1zM526 252h1v1h-1zM528 252h1v1h-1zM529 252h1v1h-1zM532 252h1v1h-1zM513 253h1v1h-1zM515 253h1v1h-1zM516 253h1v1h-1zM518 253h1v1h-1zM520 253h1v1h-1zM525 253h1v1h-1zM534 253h1v1h-1zM515 254h1v1h-1zM518 254h1v1h-1zM520 254h1v1h-1zM521 254h1v1h-1zM522 254h1v1h-1zM524 254h1v1h-1zM525 254h1v1h-1zM528 254h1v1h-1zM534 254h1v1h-1zM515 255h1v1h-1zM516 255h1v1h-1zM517 255h1v1h-1zM518 255h1v1h-1zM521 255h1v1h-1zM522 255h1v1h-1zM531 255h1v1h-1zM514 256h1v1h-1zM516 256h1v1h-1zM517 256h1v1h-1zM518 256h1v1h-1zM519 256h1v1h-1zM521 256h1v1h-1zM522 256h1v1h-1zM523 256h1v1h-1zM524 256h1v1h-1zM526 256h1v1h-1zM529 256h1v1h-1zM530 256h1v1h-1zM533 256h1v1h-1zM514 257h1v1h-1zM515 257h1v1h-1zM519 257h1v1h-1zM520 257h1v1h-1zM523 257h1v1h-1zM525 257h1v1h-1zM532 257h1v1h-1zM523 258h1v1h-1zM524 258h1v1h-1zM520 259h1v1h-1zM535 259h1v1h-1zM512 260h1v1h-1zM513 260h1v1h-1zM516 260h1v1h-1zM522 260h1v1h-1zM523 260h1v1h-1zM514 261h1v1h-1zM525 261h1v1h-1zM528 261h1v1h-1zM514 262h1v1h-1zM518 263h1v1h-1zM520 263h1v1h-1zM519 264h1v1h-1zM522 264h1v1h-1zM526 264h1v1h-1zM530 264h1v1h-1zM532 264h1v1h-1zM520 265h1v1h-1zM521 265h1v1h-1zM524 265h1v1h-1zM528 265h1v1h-1zM530 265h1v1h-1zM513 266h1v1h-1zM516 266h1v1h-1zM518 266h1v1h-1zM527 266h1v1h-1zM529 266h1v1h-1zM535 266h1v1h-1zM526 267h1v1h-1zM527 267h1v1h-1zM528 267h1v1h-1zM532 267h1v1h-1zM516 268h1v1h-1zM526 268h1v1h-1zM532 268h1v1h-1zM534 268h1v1h-1zM512 269h1v1h-1zM513 269h1v1h-1zM525 269h1v1h-1zM528 269h1v1h-1zM534 269h1v1h-1zM520 270h1v1h-1zM521 270h1v1h-1zM522 270h1v1h-1zM524 270h1v1h-1zM531 270h1v1h-1zM513 271h1v1h-1zM515 271h1v1h-1zM516 271h1v1h-1zM517 271h1v1h-1zM519 271h1v1h-1zM529 271h1v1h-1zM530 271h1v1h-1zM531 271h1v1h-1zM535 271h1v1h-1zM512 272h1v1h-1zM513 272h1v1h-1zM517 272h1v1h-1zM521 272h1v1h-1zM523 272h1v1h-1zM526 272h1v1h-1zM531 272h1v1h-1zM532 272h1v1h-1zM534 272h1v1h-1zM512 273h1v1h-1zM515 273h1v1h-1zM520 273h1v1h-1zM523 273h1v1h-1zM524 273h1v1h-1zM527 273h1v1h-1zM528 273h1v1h-1zM529 273h1v1h-1zM530 273h1v1h-1zM532 273h1v1h-1zM535 273h1v1h-1zM515 274h1v1h-1zM516 274h1v1h-1zM517 274h1v1h-1zM520 274h1v1h-1zM522 274h1v1h-1zM523 274h1v1h-1zM524 274h1v1h-1zM526 274h1v1h-1zM528 274h1v1h-1zM529 274h1v1h-1zM531 274h1v1h-1zM532 274h1v1h-1z' fill='#001800' opacity='0.85'/><path d='M513.5 263h1v1h-1z M518.5 263h1v1h-1z M525 264h1v1h-1z M527 263h1v1h-1z M530 263h1v1h-1z' fill='#8a6a00'/><path d='M517.5 324.7 L531 324.7' stroke='#7c847c' stroke-width='1.2'/><path d='M513.2 302.4 L522.6 311.6' stroke='#c4c4c4' stroke-width='1.5' stroke-linecap='round'/><path d='M515 305.6 L517.4 308' stroke='#777' stroke-width='0.8'/><path d='M525.6 309 L527 305 Q528 302.6 531 302.2 L530 304.8 L531.6 306 L533.6 303.8 Q534.4 306.8 532 308.6 L528.6 310.6Z' fill='#c9c9c9' stroke='#8a8a8a' stroke-width='0.6'/><path d='M528.4 308.6 L530 306.4' stroke='#555' stroke-width='0.9'/><path d='M515 322.8 L525.3 311.4' stroke='#1058dc' stroke-width='4.4' stroke-linecap='round'/><path d='M515.8 320.6 L520.6 315.4' stroke='#0030b0' stroke-width='1.4' stroke-linecap='round'/><circle cx='515.2' cy='322.6' r='0.9' fill='#9ad0ff'/><path d='M523 313 L533 322.6' stroke='#b81414' stroke-width='4.6' stroke-linecap='round'/><path d='M524 313.6 L533.4 322.6' stroke='#f0a0a0' stroke-width='0.9'/></svg>
<svg width='599' height='668' viewBox='549 40 599 668' style='left:549px;top:40px' font-family='"Liberation Sans",sans-serif'><text x='849' y='70' text-anchor='middle' font-size='22' font-weight='bold'>Distribution Data</text><path d='M617 647.5 L617 81 L1087 81' fill='none' stroke='#a0a0a0' stroke-width='2'/><path d='M613.5 85.89999999999998 L613.5 643.1 M605 642.5 L613.5 642.5 M609 624.5 L613.5 624.5 M609 605.5 L613.5 605.5 M609 586.5 L613.5 586.5 M609 568.5 L613.5 568.5 M605 549.5 L613.5 549.5 M609 531.5 L613.5 531.5 M609 512.5 L613.5 512.5 M609 494.5 L613.5 494.5 M609 475.5 L613.5 475.5 M605 457.5 L613.5 457.5 M609 438.5 L613.5 438.5 M609 420.5 L613.5 420.5 M609 401.5 L613.5 401.5 M609 383.5 L613.5 383.5 M605 364.5 L613.5 364.5 M609 345.5 L613.5 345.5 M609 327.5 L613.5 327.5 M609 308.5 L613.5 308.5 M609 290.5 L613.5 290.5 M605 271.5 L613.5 271.5 M609 253.5 L613.5 253.5 M609 234.5 L613.5 234.5 M609 216.5 L613.5 216.5 M609 197.5 L613.5 197.5 M605 179.5 L613.5 179.5 M609 160.5 L613.5 160.5 M609 142.5 L613.5 142.5 M609 123.5 L613.5 123.5 M609 104.5 L613.5 104.5 M605 86.5 L613.5 86.5' stroke='#000' stroke-width='1.1' fill='none'/><text x='599.5' y='91.8' text-anchor='end' font-size='14'>4</text><text x='599.5' y='184.5' text-anchor='end' font-size='14'>3.5</text><text x='599.5' y='277.2' text-anchor='end' font-size='14'>3</text><text x='599.5' y='369.9' text-anchor='end' font-size='14'>2.5</text><text x='599.5' y='462.6' text-anchor='end' font-size='14'>2</text><text x='599.5' y='555.3' text-anchor='end' font-size='14'>1.5</text><text x='599.5' y='648.0' text-anchor='end' font-size='14'>1</text><path d='M1090.5 86.0 L1090.5 642.9 M1090.5 642.5 L1098.5 642.5 M1090.5 614.5 L1094.5 614.5 M1090.5 586.5 L1096.5 586.5 M1090.5 559.5 L1094.5 559.5 M1090.5 531.5 L1098.5 531.5 M1090.5 503.5 L1094.5 503.5 M1090.5 475.5 L1096.5 475.5 M1090.5 447.5 L1094.5 447.5 M1090.5 420.5 L1098.5 420.5 M1090.5 392.5 L1094.5 392.5 M1090.5 364.5 L1096.5 364.5 M1090.5 336.5 L1094.5 336.5 M1090.5 308.5 L1098.5 308.5 M1090.5 281.5 L1094.5 281.5 M1090.5 253.5 L1096.5 253.5 M1090.5 225.5 L1094.5 225.5 M1090.5 197.5 L1098.5 197.5 M1090.5 169.5 L1094.5 169.5 M1090.5 142.5 L1096.5 142.5 M1090.5 114.5 L1094.5 114.5 M1090.5 86.5 L1098.5 86.5' stroke='#000' stroke-width='1.1' fill='none'/><text x='1103.5' y='91.5' font-size='14'>1,000</text><text x='1103.5' y='202.7' font-size='14'>800</text><text x='1103.5' y='313.9' font-size='14'>600</text><text x='1103.5' y='425.0' font-size='14'>400</text><text x='1103.5' y='536.2' font-size='14'>200</text><text x='1103.5' y='647.4' font-size='14'>0</text><path d='M621.6 651.5 L1082.254 651.5 M622.5 651.5 L622.5 655.5 M633.5 651.5 L633.5 655.5 M645.5 651.5 L645.5 655.5 M657.5 651.5 L657.5 655.5 M669.5 651.5 L669.5 659.5 M681.5 651.5 L681.5 655.5 M692.5 651.5 L692.5 655.5 M704.5 651.5 L704.5 655.5 M716.5 651.5 L716.5 655.5 M728.5 651.5 L728.5 659.5 M739.5 651.5 L739.5 655.5 M751.5 651.5 L751.5 655.5 M763.5 651.5 L763.5 655.5 M775.5 651.5 L775.5 655.5 M787.5 651.5 L787.5 659.5 M798.5 651.5 L798.5 655.5 M810.5 651.5 L810.5 655.5 M822.5 651.5 L822.5 655.5 M834.5 651.5 L834.5 655.5 M846.5 651.5 L846.5 659.5 M857.5 651.5 L857.5 655.5 M869.5 651.5 L869.5 655.5 M881.5 651.5 L881.5 655.5 M893.5 651.5 L893.5 655.5 M904.5 651.5 L904.5 659.5 M916.5 651.5 L916.5 655.5 M928.5 651.5 L928.5 655.5 M940.5 651.5 L940.5 655.5 M952.5 651.5 L952.5 655.5 M963.5 651.5 L963.5 659.5 M975.5 651.5 L975.5 655.5 M987.5 651.5 L987.5 655.5 M999.5 651.5 L999.5 655.5 M1011.5 651.5 L1011.5 655.5 M1022.5 651.5 L1022.5 659.5 M1034.5 651.5 L1034.5 655.5 M1046.5 651.5 L1046.5 655.5 M1058.5 651.5 L1058.5 655.5 M1069.5 651.5 L1069.5 655.5 M1081.5 651.5 L1081.5 659.5' stroke='#000' stroke-width='1.1' fill='none'/><text x='668.5' y='675.3' text-anchor='middle' font-size='14'>5</text><text x='727.5' y='675.3' text-anchor='middle' font-size='14'>10</text><text x='786.4' y='675.3' text-anchor='middle' font-size='14'>15</text><text x='845.3' y='675.3' text-anchor='middle' font-size='14'>20</text><text x='904.3' y='675.3' text-anchor='middle' font-size='14'>25</text><text x='963.2' y='675.3' text-anchor='middle' font-size='14'>30</text><text x='1022.1' y='675.3' text-anchor='middle' font-size='14'>35</text><text x='1081.1' y='675.3' text-anchor='middle' font-size='14'>40</text><text x='851.5' y='693.5' text-anchor='middle' font-size='16' font-weight='bold'>Sedimentation Coefficient corrected for water at 20°C</text><text transform='translate(574 364) rotate(-90)' text-anchor='middle' font-size='16' font-weight='bold'>Frictional Ratio f/f0</text></svg>
</div></body></html>
